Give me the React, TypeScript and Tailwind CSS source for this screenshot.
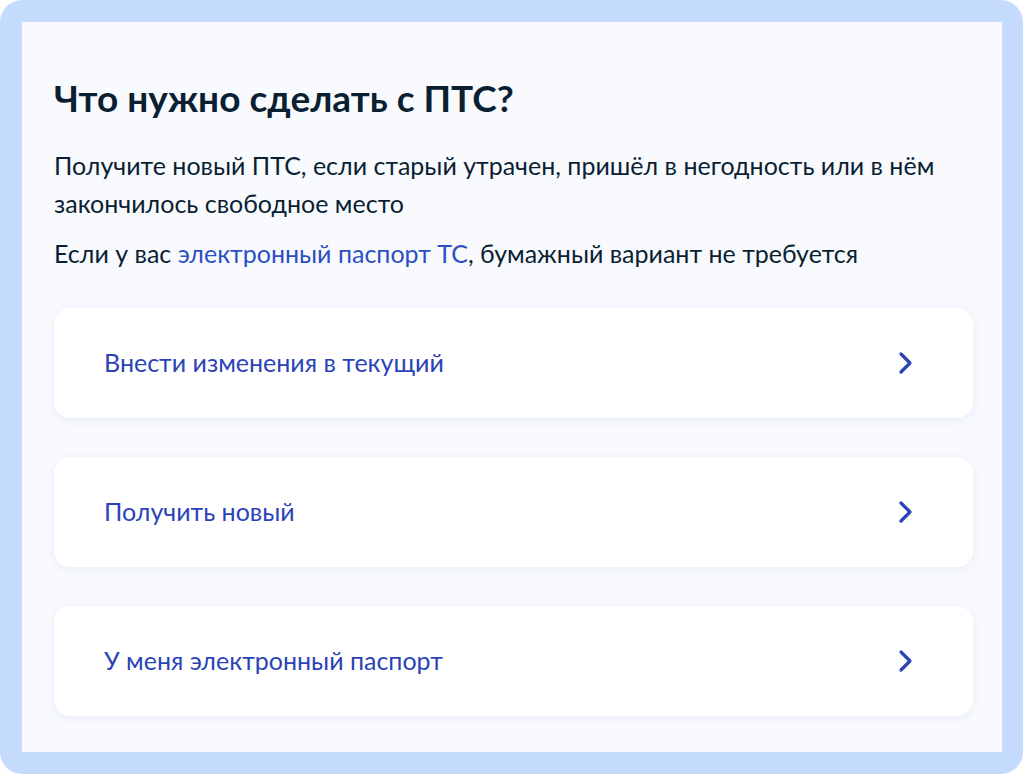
import React from "react";

const options = ["Внести изменения в текущий", "Получить новый", "У меня электронный паспорт"];

function Chevron() {
  return (
    <svg width="18" height="24" viewBox="0 0 18 24" fill="none">
      <path d="M4 3l9 9-9 9" stroke="#2a44b8" strokeWidth="3.2" strokeLinecap="round" strokeLinejoin="round" />
    </svg>
  );
}

export default function App() {
  return (
    <div className="h-[774px] w-[1024px] bg-white font-['Lato','Noto_Sans',sans-serif]">
      <div className="h-[774px] w-[1023px] rounded-[22px] bg-[#c4dbfd] p-[22px] pr-[21px]">
        <div className="h-[730px] w-[980px] bg-[#f8fafe] px-8 pt-[54px]">
          <h1 className="text-[37px] font-bold leading-[44px] text-[#0b1f33]">Что нужно сделать с ПТС?</h1>
          <p className="mt-[26px] text-[25px] leading-[38px] text-[#0b1f33]">
            Получите новый ПТС, если старый утрачен, пришёл в негодность или в нём закончилось свободное место
          </p>
          <p className="mt-[12px] text-[25px] leading-[38px] text-[#0b1f33]">
            Если у вас <span className="text-[#2c4fc4]">электронный паспорт ТС</span>, бумажный вариант не требуется
          </p>
          <div className="mt-[36px] flex w-[919px] flex-col gap-[39px]">
            {options.map((o) => (
              <div
                key={o}
                className="flex h-[110px] items-center justify-between rounded-2xl bg-white pl-[50px] pr-[58px] shadow-[0_2px_10px_rgba(100,120,180,0.10)]"
              >
                <span className="text-[25px] text-[#2a44b8]">{o}</span>
                <Chevron />
              </div>
            ))}
          </div>
        </div>
      </div>
    </div>
  );
}
